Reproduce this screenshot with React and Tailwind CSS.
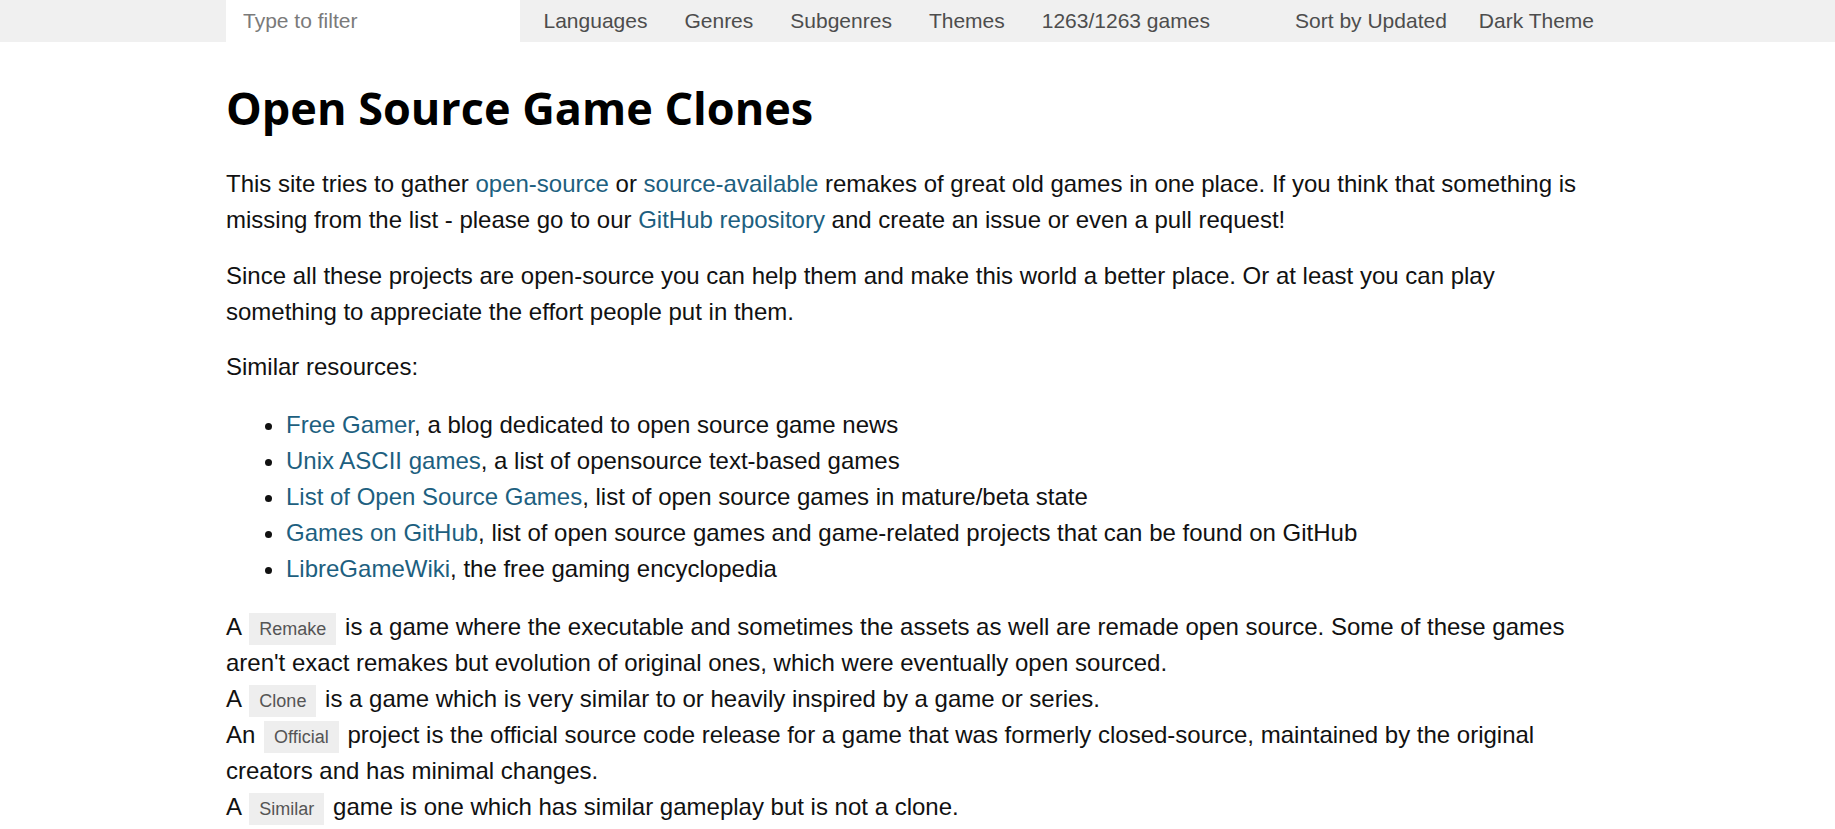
function Tag({ children }) {
  return (
    <span className="inline-block bg-[#eeeeee] text-[#555] text-[18px] leading-[32px] px-[10px] mx-[2px] align-middle">
      {children}
    </span>
  );
}

function A({ children }) {
  return (
    <a href="#" className="text-[#1d5f80] no-underline">
      {children}
    </a>
  );
}

const navItems = ["Languages", "Genres", "Subgenres", "Themes", "1263/1263 games"];

const resources = [
  ["Free Gamer", ", a blog dedicated to open source game news"],
  ["Unix ASCII games", ", a list of opensource text-based games"],
  ["List of Open Source Games", ", list of open source games in mature/beta state"],
  [
    "Games on GitHub",
    ", list of open source games and game-related projects that can be found on GitHub",
  ],
  ["LibreGameWiki", ", the free gaming encyclopedia"],
];

export default function App() {
  return (
    <div className="min-h-screen bg-white font-['Liberation_Sans',Arial,sans-serif]">
      <nav className="bg-[#f0f0f0] h-[42px]">
        <div className="w-[1383px] mx-auto h-full flex items-center text-[21px] text-[#4d4d4d]">
          <input
            type="text"
            placeholder="Type to filter"
            className="w-[294px] h-full bg-white px-[17px] outline-none placeholder:text-[#7a7a7a]"
          />
          <div className="flex ml-[5px]">
            {navItems.map((item) => (
              <span key={item} className="px-[18.5px]">
                {item}
              </span>
            ))}
          </div>
          <div className="flex ml-auto">
            <span className="pl-[18px] pr-[14px]">Sort by Updated</span>
            <span className="pl-[18px] pr-[15px]">Dark Theme</span>
          </div>
        </div>
      </nav>

      <main className="w-[1383px] mx-auto text-[24px] leading-[36px] text-[#111]">
        <h1 className="font-['Open_Sans','Noto_Sans',sans-serif] font-bold text-[45px] leading-[60px] mt-[36px] mb-[28px] text-black">
          Open Source Game Clones
        </h1>

        <p className="mb-[20px]">
          This site tries to gather <A>open-source</A> or <A>source-available</A> remakes of
          great old games in one place. If you think that something is missing from the list -
          please go to our <A>GitHub repository</A> and create an issue or even a pull request!
        </p>

        <p className="mb-[19px]">
          Since all these projects are open-source you can help them and make this world a better
          place. Or at least you can play something to appreciate the effort people put in them.
        </p>

        <p className="mb-[22px]">Similar resources:</p>

        <ul className="list-disc pl-[60px] mb-[22px]">
          {resources.map(([link, rest]) => (
            <li key={link}>
              <A>{link}</A>
              {rest}
            </li>
          ))}
        </ul>

        <div>
          <div>
            A <Tag>Remake</Tag> is a game where the executable and sometimes the assets as well are
            remade open source. Some of these games aren't exact remakes but evolution of original
            ones, which were eventually open sourced.
          </div>
          <div>
            A <Tag>Clone</Tag> is a game which is very similar to or heavily inspired by a game or
            series.
          </div>
          <div>
            An <Tag>Official</Tag> project is the official source code release for a game that was
            formerly closed-source, maintained by the original creators and has minimal changes.
          </div>
          <div>
            A <Tag>Similar</Tag> game is one which has similar gameplay but is not a clone.
          </div>
        </div>
      </main>
    </div>
  );
}
